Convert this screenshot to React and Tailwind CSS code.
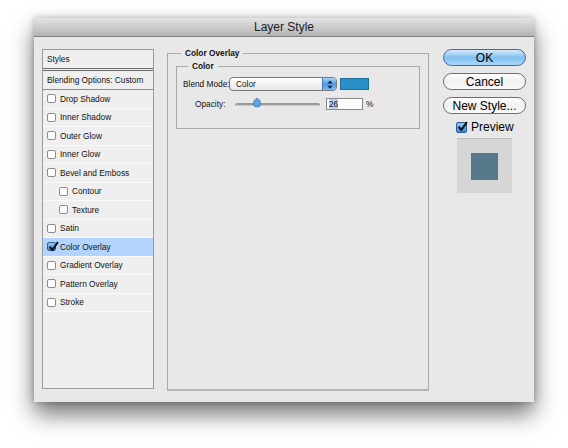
import React from "react";

const font = { fontFamily: '"Liberation Sans", Arial, sans-serif' };

const effects = [
  { name: "Drop Shadow" },
  { name: "Inner Shadow" },
  { name: "Outer Glow" },
  { name: "Inner Glow" },
  { name: "Bevel and Emboss" },
  { name: "Contour", indent: true },
  { name: "Texture", indent: true },
  { name: "Satin" },
  { name: "Color Overlay", checked: true },
  { name: "Gradient Overlay" },
  { name: "Pattern Overlay" },
  { name: "Stroke" },
];

const Check = ({ checked, size = "w-[9px] h-[9px]" }) => (
  <span
    className={`relative ${size} shrink-0 rounded-[2px] border ${
      checked ? "border-[#2a5a9a] bg-gradient-to-b from-[#9cc8f2] to-[#3d85d6]" : "border-[#8c8c8c] bg-white"
    }`}
  >
    {checked && (
      <svg viewBox="0 0 10 10" className="absolute -top-[2px] left-0 w-[11px] h-[11px]">
        <path d="M1.5 5.2 L4 8 L9 1" fill="none" stroke="#111" strokeWidth="1.8" />
      </svg>
    )}
  </span>
);

const AquaButton = ({ label, primary }) => (
  <div
    className={`h-[17px] rounded-full border flex items-center justify-center text-[12px] text-black ${
      primary
        ? "border-[#3a6aa8] bg-gradient-to-b from-[#d6ebfd] via-[#82c0f2] to-[#a9d8fb]"
        : "border-[#6e6e6e] bg-gradient-to-b from-white via-[#f0f0f0] to-[#fafafa]"
    }`}
  >
    {label}
  </div>
);

export default function App() {
  return (
    <div className="w-[568px] h-[448px] bg-white overflow-hidden pt-[18px] pl-[34px]" style={font}>
      <div className="w-[500px] h-[384px] bg-[#e8e8e8] flex flex-col shadow-[0_12px_22px_rgba(0,0,0,0.55),0_0_6px_rgba(0,0,0,0.25)]">
        {/* title bar */}
        <div className="h-[19px] shrink-0 bg-gradient-to-b from-[#e4e4e4] to-[#b4b4b4] border-b border-[#7e7e7e] flex items-center justify-center text-[12px] text-[#222]">
          Layer Style
        </div>

        <div className="flex flex-1 pl-[8px] pt-[12px]">
          {/* styles list */}
          <div className="w-[112px] h-[340px] border border-[#9a9a9a] bg-[#efefef] text-[8.3px] text-[#111] flex flex-col whitespace-nowrap">
            <div className="h-[21px] shrink-0 flex items-center pl-[4px] border-b-[3px] border-double border-[#6c6c6c]">Styles</div>
            <div className="h-[19px] shrink-0 flex items-center pl-[4px] border-b border-[#8a8a8a]">Blending Options: Custom</div>
            {effects.map((e) => (
              <div
                key={e.name}
                className={`h-[18.5px] shrink-0 flex items-center gap-[4px] border-b border-[#f9f9f9] ${
                  e.indent ? "pl-[16px]" : "pl-[4px]"
                } ${e.checked ? "bg-[#b3d4fc]" : ""}`}
              >
                <Check checked={e.checked} />
                <span>{e.name}</span>
              </div>
            ))}
          </div>

          {/* main settings */}
          <fieldset className="ml-[13px] -mt-[1px] w-[262px] h-[343px] border border-[#a9a9a9] border-b-2 border-b-[#b4b4b4] px-[8px] pb-0">
            <legend className="ml-[5px] px-[4px] text-[8.3px] font-bold text-[#111] leading-[10px]">Color Overlay</legend>
            <fieldset className="mt-[3px] h-[68px] border border-[#a9a9a9] px-[6px]">
              <legend className="ml-[5px] px-[4px] text-[8.3px] font-bold text-[#111] leading-[10px]">Color</legend>
              <div className="flex items-center mt-[6px] text-[8.3px] text-[#111] whitespace-nowrap">
                <span className="w-[46px] shrink-0">Blend Mode:</span>
                <div className="shrink-0 w-[108px] h-[14px] rounded-[4px] border border-[#7a7a7a] bg-gradient-to-b from-white to-[#e6e6e6] flex items-center overflow-hidden">
                  <span className="flex-1 pl-[6px]">Color</span>
                  <span className="w-[14px] h-full bg-gradient-to-b from-[#a9d4fa] via-[#4d9ae6] to-[#7fbaf2] border-l border-[#4a78b0] flex items-center justify-center">
                    <svg viewBox="0 0 8 12" className="w-[6px] h-[9px]">
                      <path d="M4 0.5 L7.5 4.5 H0.5 Z M4 11.5 L7.5 7.5 H0.5 Z" fill="#10233d" />
                    </svg>
                  </span>
                </div>
                <span className="ml-[3px] w-[29px] h-[12px] bg-[#2a90c9] border border-[#1f6d99]" />
              </div>
              <div className="flex items-center mt-[7px] text-[8.3px] text-[#111]">
                <span className="w-[52px] pl-[12px]">Opacity:</span>
                <div className="relative w-[85px] h-[3px] rounded-full bg-[#9a9a9a] border-b border-[#c8c8c8]">
                  <svg viewBox="0 0 10 12" className="absolute -top-[6px] left-[18px] w-[8px] h-[11px]">
                    <path d="M5 0.5 L9 4 V10 Q9 11.5 5 11.5 Q1 11.5 1 10 V4 Z" fill="#5ea6ea" stroke="#33679f" strokeWidth="0.8" />
                  </svg>
                </div>
                <div className="ml-[6px] w-[37px] h-[12px] bg-white border border-[#8a8a8a] flex items-center pl-[2px]">
                  <span className="bg-[#b3d4fc] leading-[10px]">26</span>
                </div>
                <span className="ml-[3px]">%</span>
              </div>
            </fieldset>
          </fieldset>

          {/* right column */}
          <div className="ml-[14px] w-[83px] flex flex-col">
            <div className="flex flex-col gap-[7px]">
              <AquaButton label="OK" primary />
              <AquaButton label="Cancel" />
              <AquaButton label="New Style..." />
            </div>
            <div className="mt-[4px] pl-[13px] flex items-center gap-[4px] text-[12px] text-black">
              <Check checked size="w-[11px] h-[11px]" />
              <span>Preview</span>
            </div>
            <div className="mt-[2px] ml-[14px] w-[55px] h-[55px] bg-[#d6d6d6] border-t border-[#bcbcbc] flex items-center justify-center">
              <span className="w-[27px] h-[27px] bg-[#55798a]" />
            </div>
          </div>
        </div>
      </div>
    </div>
  );
}
